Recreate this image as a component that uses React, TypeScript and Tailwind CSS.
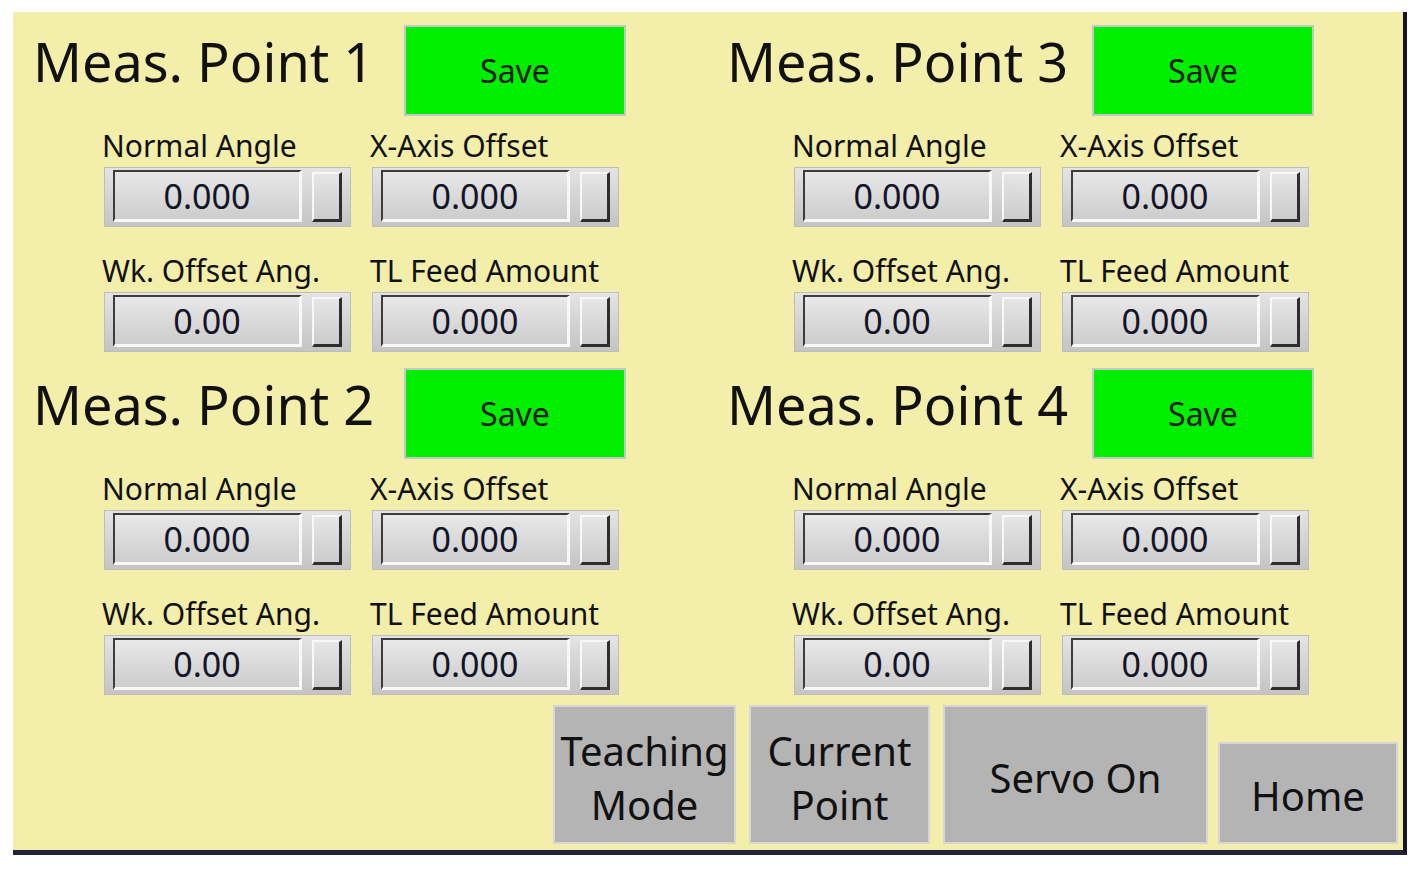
import React from "react"

const font = { fontFamily: '"Noto Sans", "Open Sans", sans-serif' }

interface FieldProps {
  label: string
  value: string
}

function Field({ label, value }: FieldProps) {
  return (
    <div className="flex flex-col">
      <div className="-ml-[2px] h-[29px] whitespace-nowrap text-[30px] leading-[29px] text-[#111]">{label}</div>
      <div className="mt-[7px] flex h-[60px] w-[247px] items-start border border-[#bdbdbd] bg-linear-to-b from-[#e4e4e4] to-[#c4c4c4] pl-[8px] pt-[2px]">
        <div className="flex h-[52px] w-[189px] items-center justify-center border-t-2 border-l-2 border-r-[3px] border-b-[3px] border-t-[#3c3c3c] border-l-[#3c3c3c] border-r-[#f8f8f8] border-b-[#f8f8f8] bg-linear-to-b from-[#e8e8e8] to-[#cdcdcd] text-[34px] leading-none text-[#141428]">
          {value}
        </div>
        <div className="ml-[10px] mt-[2px] h-[50px] w-[30px] border-t-2 border-l-2 border-r-[3px] border-b-[3px] border-t-[#f8f8f8] border-l-[#f8f8f8] border-r-[#2e2e2e] border-b-[#2e2e2e] bg-linear-to-b from-[#e6e6e6] to-[#cccccc]" />
      </div>
    </div>
  )
}

interface PointBlockProps {
  n: number
  right?: boolean
}

function PointBlock({ n, right }: PointBlockProps) {
  return (
    <div className="flex flex-col">
      <div className="flex items-start pl-[20px]">
        <div className={`mt-[9px] w-[371px] whitespace-nowrap text-[54px] leading-[54px] text-[#111] ${right ? "pl-[4px]" : ""}`}>
          Meas. Point {n}
        </div>
        <button className={`flex h-[91px] w-[222px] items-center justify-center border-2 border-[#c6c6c6] bg-[#00ee00] text-[32px] text-[#1a1a1a] ${right ? "-ml-[2px]" : ""}`}>
          Save
        </button>
      </div>
      <div className="ml-[91px] mt-[15px] grid grid-cols-[247px_247px] gap-x-[21px] gap-y-[29px]">
        <Field label="Normal Angle" value="0.000" />
        <Field label="X-Axis Offset" value="0.000" />
        <Field label="Wk. Offset Ang." value="0.00" />
        <Field label="TL Feed Amount" value="0.000" />
      </div>
    </div>
  )
}

function BigButton({ children, className }: { children: React.ReactNode; className: string }) {
  return (
    <button
      className={`flex flex-col items-center justify-center border-2 border-[#d6d6d6] bg-[#b4b4b4] pt-[6px] text-[40px] leading-[54px] text-[#111] ${className}`}
    >
      {children}
    </button>
  )
}

export default function App() {
  return (
    <div className="h-[873px] w-[1424px] overflow-hidden bg-white pl-[13px] pt-[12px]" style={font}>
      <div className="flex h-[843px] w-[1394px] flex-col border-r-4 border-b-[5px] border-r-[#14142a] border-b-[#23233a] bg-[#f3eeaa] pt-[13px]">
        <div className="grid grid-cols-[690px_1fr] gap-y-[16px]">
          <PointBlock n={1} />
          <PointBlock n={3} right />
          <PointBlock n={2} />
          <PointBlock n={4} right />
        </div>
        <div className="mt-[10px] flex items-end pl-[540px]">
          <BigButton className="h-[139px] w-[183px]">
            <span>Teaching</span>
            <span>Mode</span>
          </BigButton>
          <BigButton className="ml-[13px] h-[139px] w-[181px]">
            <span>Current</span>
            <span>Point</span>
          </BigButton>
          <BigButton className="ml-[13px] h-[139px] w-[265px]">
            <span>Servo On</span>
          </BigButton>
          <BigButton className="ml-[10px] h-[102px] w-[180px]">
            <span>Home</span>
          </BigButton>
        </div>
      </div>
    </div>
  )
}
